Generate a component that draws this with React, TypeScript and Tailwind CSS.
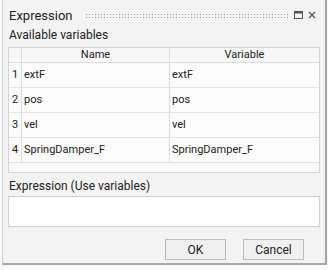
import React from 'react';

const rows = ['extF', 'pos', 'vel', 'SpringDamper_F'];

const App = () => {
  return (
    <div className="w-[328px] h-[270px] bg-[#fafafa] font-['Roboto',sans-serif] text-[#222]">
      <div className="ml-[2px] w-[325px] h-[265px] bg-[#f3f3f3] border-l border-[#d0d0d0] border-r-2 border-r-[#a3a3a3] border-b-2 border-b-[#a8a8a8] flex flex-col px-[5px]">
        {/* Title bar */}
        <div className="flex items-center h-[28px] pt-[2px]">
          <span className="text-[13px] leading-none ml-[1px]">Expression</span>
          <svg className="ml-[13px] flex-1 h-[8px]" preserveAspectRatio="none">
            <defs>
              <pattern id="grip" width="3" height="3" patternUnits="userSpaceOnUse">
                <rect x="0" y="0" width="1" height="1" fill="#9a9a9a" />
              </pattern>
            </defs>
            <rect x="0" y="1" width="100%" height="7" fill="url(#grip)" />
          </svg>
          <svg className="ml-[5px] w-[9px] h-[8px]" viewBox="0 0 9 8">
            <rect x="0.5" y="0.5" width="8" height="7" fill="none" stroke="#555" />
            <rect x="0.5" y="0.5" width="8" height="2" fill="#555" />
          </svg>
          <svg className="ml-[5px] mr-[4px] w-[8px] h-[8px]" viewBox="0 0 8 8">
            <path d="M1 1L7 7M7 1L1 7" stroke="#555" strokeWidth="1.3" />
          </svg>
        </div>

        <div className="text-[12px] leading-none mt-[1px] ml-[1px]">Available variables</div>

        {/* Table */}
        <div className="mt-[6px] h-[126px] border border-[#d3d3d3] bg-[#fbfbfb] text-[11px]">
          <div className="flex h-[15px] border-b border-[#dcdcdc] bg-[#f7f7f7]">
            <div className="w-[13px] border-r border-[#dcdcdc]" />
            <div className="w-[148px] border-r border-[#dcdcdc] text-center leading-[14px]">Name</div>
            <div className="flex-1 text-center leading-[14px]">Variable</div>
          </div>
          {rows.map((r, i) => (
            <div key={r} className="flex h-[25px] border-b border-[#e2e2e2]">
              <div className="w-[13px] border-r border-[#dcdcdc] flex items-center justify-center">{i + 1}</div>
              <div className="w-[148px] border-r border-[#dcdcdc] flex items-center pl-[2px]">{r}</div>
              <div className="flex-1 flex items-center pl-[2px]">{r}</div>
            </div>
          ))}
        </div>

        <div className="text-[12px] leading-none mt-[7px] ml-[1px]">Expression (Use variables)</div>
        <div className="mt-[4px] h-[31px] bg-white border border-[#cfcfcf]" />

        {/* Buttons */}
        <div className="flex justify-end gap-[17px] mt-[12px] mr-[16px] text-[12px]">
          <button className="w-[61px] h-[21px] bg-[#f0f0f0] border border-[#bdbdbd]">OK</button>
          <button className="w-[61px] h-[21px] bg-[#f0f0f0] border border-[#bdbdbd]">Cancel</button>
        </div>
      </div>
    </div>
  );
};

export default App;
